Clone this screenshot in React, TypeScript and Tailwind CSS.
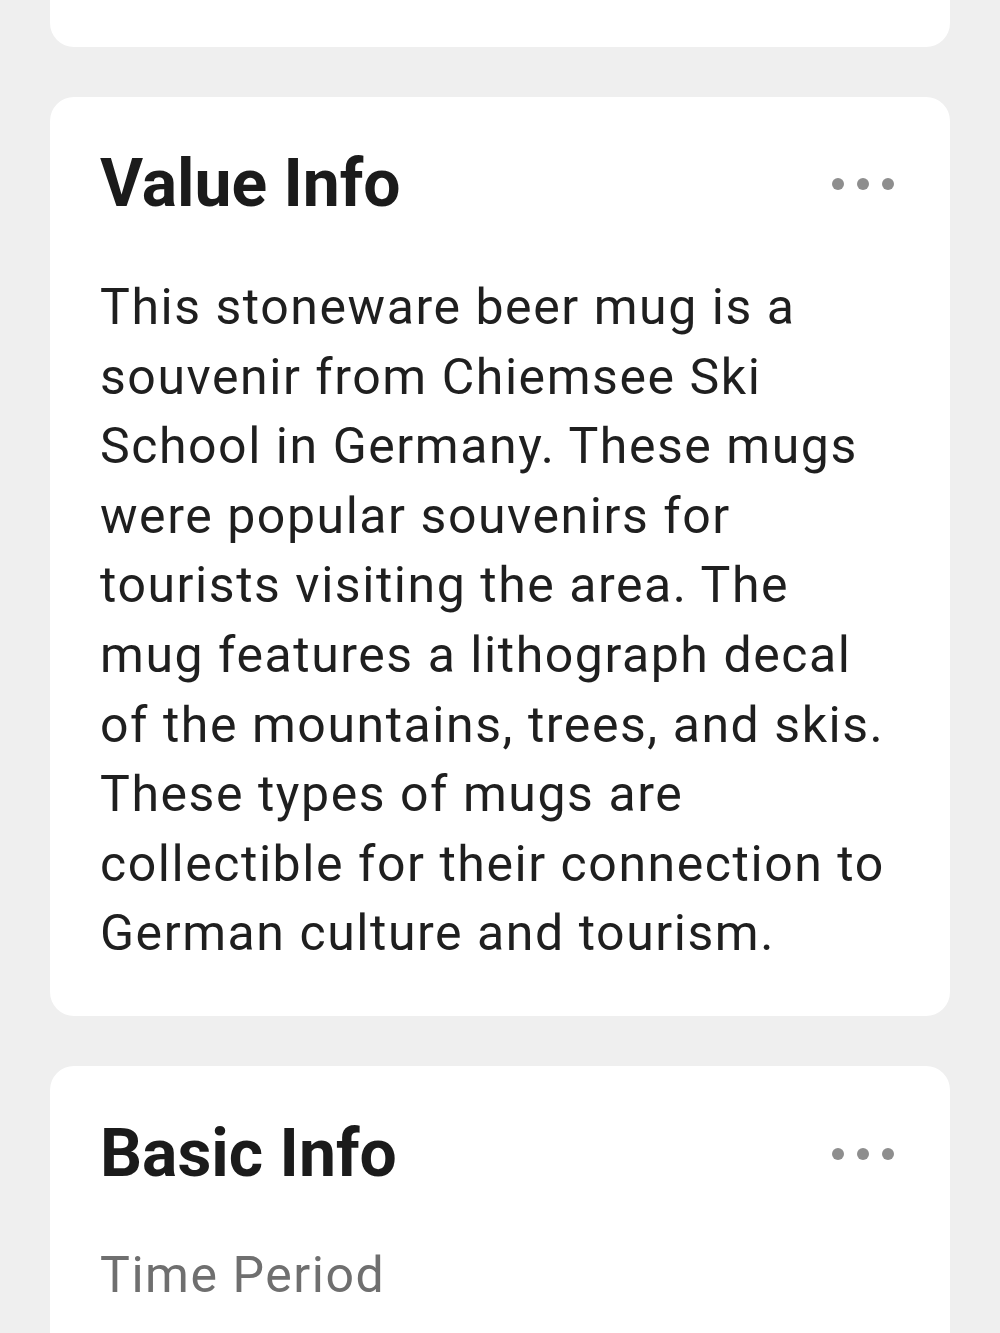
const body =
  "This stoneware beer mug is a souvenir from Chiemsee Ski School in Germany. These mugs were popular souvenirs for tourists visiting the area. The mug features a lithograph decal of the mountains, trees, and skis. These types of mugs are collectible for their connection to German culture and tourism.";

function Dots() {
  return (
    <div className="flex items-center gap-[13px] pr-[6px]">
      <span className="block h-[12px] w-[12px] rounded-full bg-[#8e8e8e]" />
      <span className="block h-[12px] w-[12px] rounded-full bg-[#8e8e8e]" />
      <span className="block h-[12px] w-[12px] rounded-full bg-[#8e8e8e]" />
    </div>
  );
}

function CardHeader({ title }: { title: string }) {
  return (
    <div className="flex items-center justify-between">
      <h2 className="text-[66px] font-bold leading-[66px] text-[#1b1b1b]">{title}</h2>
      <Dots />
    </div>
  );
}

export default function App() {
  return (
    <div className="h-[1333px] overflow-hidden bg-[#efefef] px-[50px] font-['Roboto',sans-serif]">
      {/* tail of the card above, scrolled mostly out of view */}
      <div className="h-[47px] rounded-b-[24px] bg-white" />

      <section className="mt-[50px] rounded-[24px] bg-white px-[50px] pb-[47px] pt-[54px]">
        <CardHeader title="Value Info" />
        <p className="mt-[56px] text-[50px] leading-[69.6px] tracking-[0.031em] text-[#1f1f1f]">
          {body}
        </p>
      </section>

      <section className="mt-[50px] h-[400px] rounded-[24px] bg-white px-[50px] pt-[55px]">
        <CardHeader title="Basic Info" />
        <p className="mt-[54px] text-[50px] leading-[69.6px] tracking-[0.031em] text-[#6f6f6f]">
          Time Period
        </p>
      </section>
    </div>
  );
}
